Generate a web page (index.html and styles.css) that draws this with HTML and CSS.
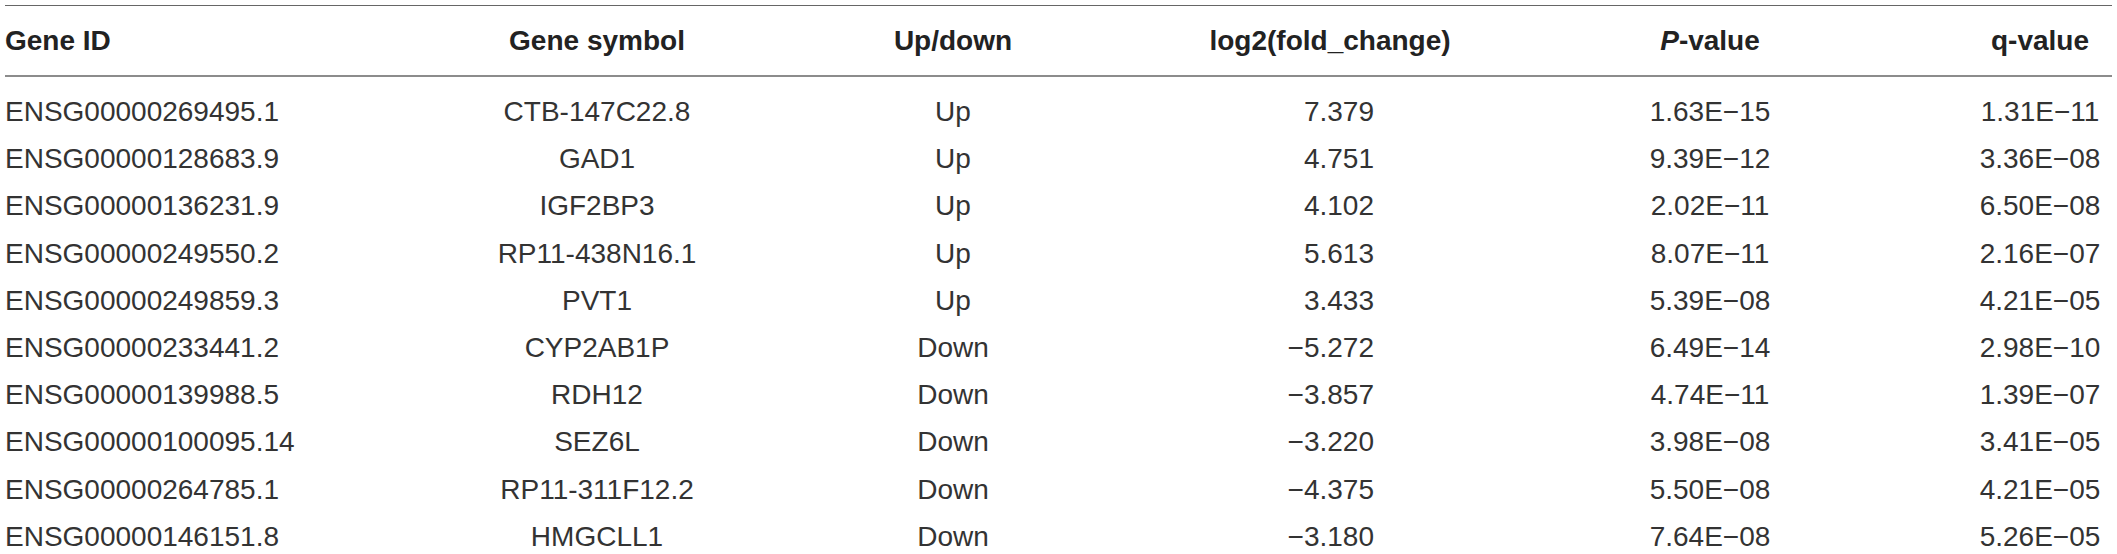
FILE: index.html
```html
<!DOCTYPE html>
<html>
<head>
<meta charset="utf-8">
<link rel="stylesheet" href="styles.css">
</head>
<body>
<div class="table">
  <div class="row head">
    <div class="c c1">Gene ID</div>
    <div class="c c2">Gene symbol</div>
    <div class="c c3">Up/down</div>
    <div class="c c4h">log2(fold_change)</div>
    <div class="c c5"><i>P</i>-value</div>
    <div class="c c6">q-value</div>
  </div>
  <div class="body">
    <div class="row"><div class="c c1">ENSG00000269495.1</div><div class="c c2">CTB-147C22.8</div><div class="c c3">Up</div><div class="c c4">7.379</div><div class="c c5">1.63E−15</div><div class="c c6">1.31E−11</div></div>
    <div class="row"><div class="c c1">ENSG00000128683.9</div><div class="c c2">GAD1</div><div class="c c3">Up</div><div class="c c4">4.751</div><div class="c c5">9.39E−12</div><div class="c c6">3.36E−08</div></div>
    <div class="row"><div class="c c1">ENSG00000136231.9</div><div class="c c2">IGF2BP3</div><div class="c c3">Up</div><div class="c c4">4.102</div><div class="c c5">2.02E−11</div><div class="c c6">6.50E−08</div></div>
    <div class="row"><div class="c c1">ENSG00000249550.2</div><div class="c c2">RP11-438N16.1</div><div class="c c3">Up</div><div class="c c4">5.613</div><div class="c c5">8.07E−11</div><div class="c c6">2.16E−07</div></div>
    <div class="row"><div class="c c1">ENSG00000249859.3</div><div class="c c2">PVT1</div><div class="c c3">Up</div><div class="c c4">3.433</div><div class="c c5">5.39E−08</div><div class="c c6">4.21E−05</div></div>
    <div class="row"><div class="c c1">ENSG00000233441.2</div><div class="c c2">CYP2AB1P</div><div class="c c3">Down</div><div class="c c4">−5.272</div><div class="c c5">6.49E−14</div><div class="c c6">2.98E−10</div></div>
    <div class="row"><div class="c c1">ENSG00000139988.5</div><div class="c c2">RDH12</div><div class="c c3">Down</div><div class="c c4">−3.857</div><div class="c c5">4.74E−11</div><div class="c c6">1.39E−07</div></div>
    <div class="row"><div class="c c1">ENSG00000100095.14</div><div class="c c2">SEZ6L</div><div class="c c3">Down</div><div class="c c4">−3.220</div><div class="c c5">3.98E−08</div><div class="c c6">3.41E−05</div></div>
    <div class="row"><div class="c c1">ENSG00000264785.1</div><div class="c c2">RP11-311F12.2</div><div class="c c3">Down</div><div class="c c4">−4.375</div><div class="c c5">5.50E−08</div><div class="c c6">4.21E−05</div></div>
    <div class="row"><div class="c c1">ENSG00000146151.8</div><div class="c c2">HMGCLL1</div><div class="c c3">Down</div><div class="c c4">−3.180</div><div class="c c5">7.64E−08</div><div class="c c6">5.26E−05</div></div>
  </div>
</div>
</body>
</html>
```

FILE: styles.css
```css
html, body {
  margin: 0;
  padding: 0;
  background: #ffffff;
}
body {
  padding: 5px 5px 0 5px;
  font-family: "Liberation Sans", Arial, sans-serif;
  font-size: 28px;
  color: #333333;
}
.table {
  width: 2107px;
  border-top: 1.5px solid #666666;
}
.row {
  display: grid;
  grid-template-columns: 414px 356px 356px 398px 362px 221px;
  align-items: center;
  height: 47.2px;
  line-height: 47.2px;
  white-space: nowrap;
}
.row.head {
  height: 69px;
  line-height: 69px;
  font-weight: bold;
  color: #222222;
  border-bottom: 2px solid #8c8c8c;
}
.body {
  padding-top: 11px;
}
.c1 { text-align: left; }
.c2, .c3, .c5, .c4h { text-align: center; }
.c4 { text-align: right; padding-right: 155px; }
.c6 { text-align: center; padding-left: 77px; }
```
